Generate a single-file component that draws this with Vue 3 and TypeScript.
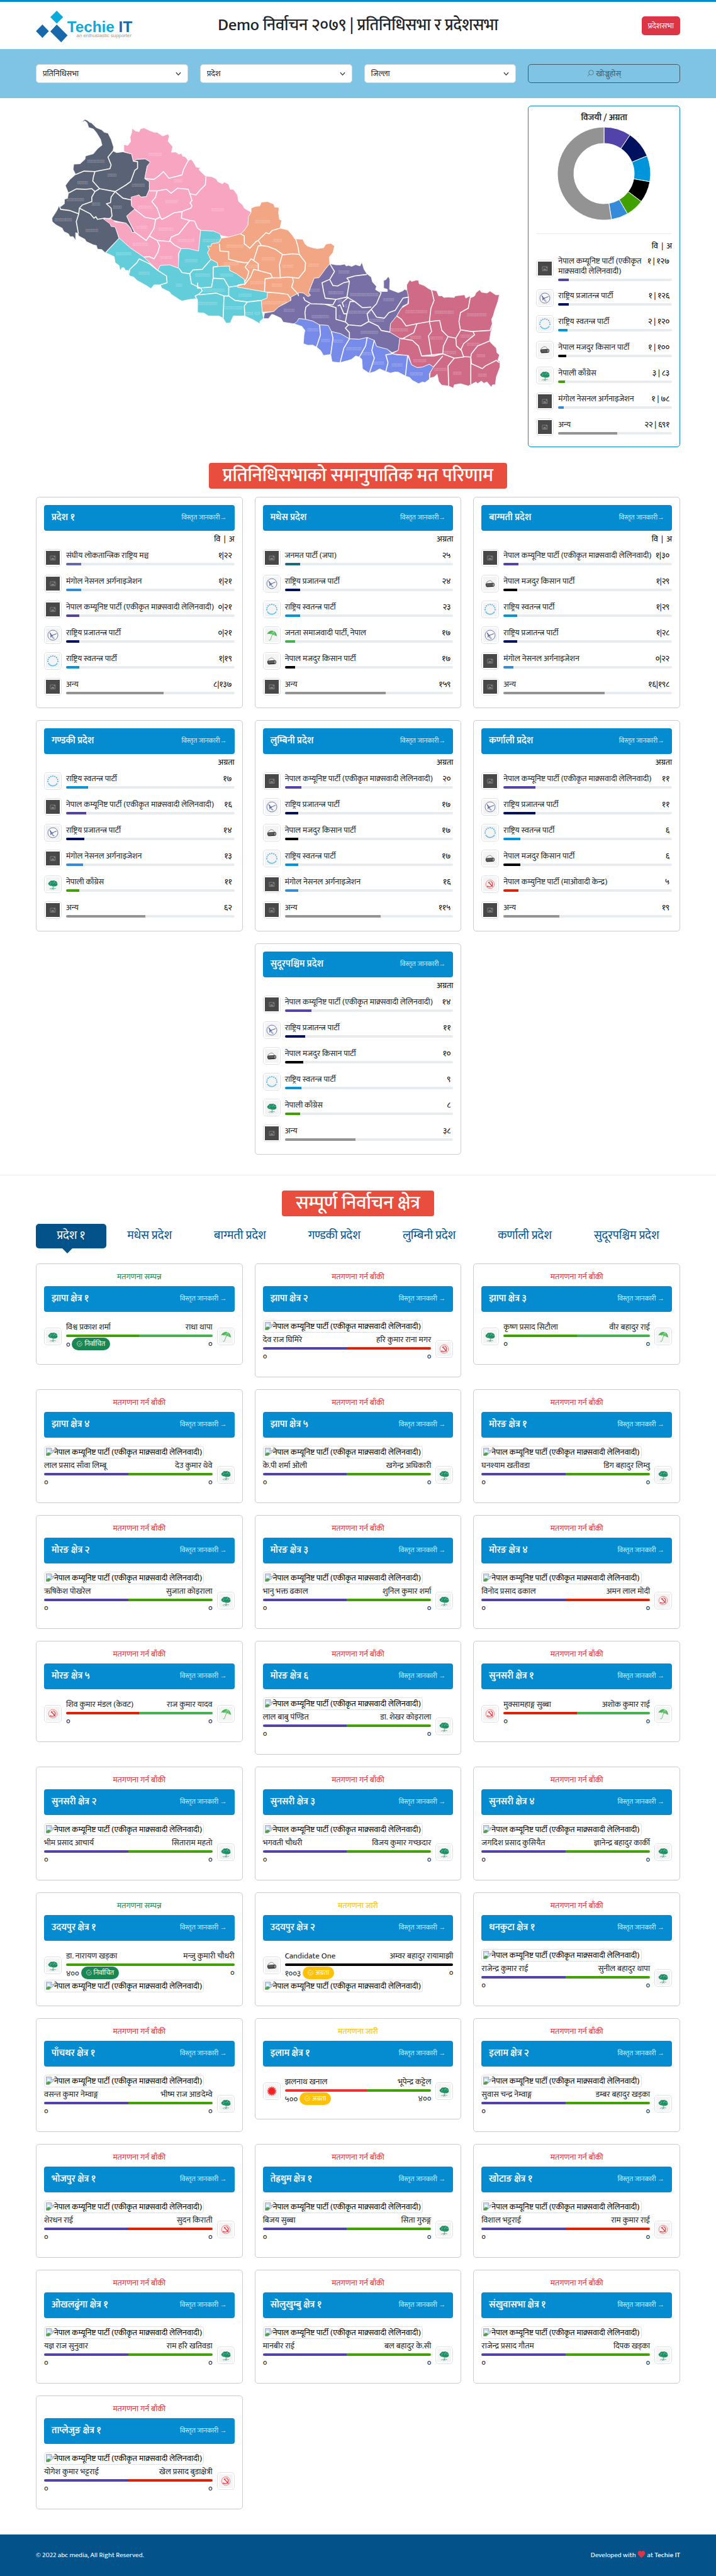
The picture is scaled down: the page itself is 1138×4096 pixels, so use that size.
<script setup lang="ts">
import { ref } from 'vue'

type Party = { name: string; color: string; icon: string }
const parties: Record<string, Party> = {
  uml: { name: 'नेपाल कम्यूनिष्ट पार्टी (एकीकृत माक्र्सवादी लेलिनवादी)', color: '#5243aa', icon: 'blank' },
  rpp: { name: 'राष्ट्रिय प्रजातन्त्र पार्टी', color: '#00115f', icon: 'plough' },
  rsp: { name: 'राष्ट्रिय स्वतन्त्र पार्टी', color: '#0095da', icon: 'bell' },
  nmkp: { name: 'नेपाल मजदुर किसान पार्टी', color: '#000000', icon: 'drum' },
  nc: { name: 'नेपाली काँग्रेस', color: '#3fa000', icon: 'tree' },
  mno: { name: 'मंगोल नेसनल अर्गनाइजेशन', color: '#348bda', icon: 'blank' },
  sl: { name: 'संघीय लोकतान्त्रिक राष्ट्रिय मञ्च', color: '#6767ad', icon: 'blank' },
  jnp: { name: 'जनमत पार्टी (जपा)', color: '#1c6b7b', icon: 'blank' },
  jsp: { name: 'जनता समाजवादी पार्टी, नेपाल', color: '#43b14e', icon: 'umbrella' },
  mc: { name: 'नेपाल कम्युनिष्ट पार्टी (माओवादी केन्द्र)', color: '#dc2200', icon: 'hammer' },
  us: { name: 'नेकपा (एकीकृत समाजवादी)', color: '#f72d2d', icon: 'sun' },
  other: { name: 'अन्य', color: '#939393', icon: 'blank' },
}

type Row = [party: string, value: string, percent: number]
const overall: Row[] = [
  ['uml', '१ | १२७', 9], ['rpp', '१ | १२६', 9], ['rsp', '२ | १२०', 8], ['nmkp', '१ | १००', 7],
  ['nc', '३ | ८३', 6], ['mno', '१ | ७८', 5], ['other', '२२ | ६९१', 52],
]
const provinces: { name: string; head: string; rows: Row[] }[] = [
  { name: 'प्रदेश १', head: 'वि  |  अ', rows: [['sl', '१|२२', 9], ['mno', '१|२१', 9], ['uml', '०|२१', 8], ['rpp', '०|२१', 8], ['rsp', '१|१९', 8], ['other', '८|१३७', 58]] },
  { name: 'मधेस प्रदेश', head: 'अग्रता', rows: [['jnp', '२५', 9], ['rpp', '२४', 9], ['rsp', '२३', 9], ['jsp', '१७', 6], ['nmkp', '१७', 6], ['other', '१५९', 60]] },
  { name: 'बाग्मती प्रदेश', head: 'वि  |  अ', rows: [['uml', '१|३०', 9], ['nmkp', '१|२९', 8], ['rsp', '१|२९', 8], ['rpp', '१|२८', 8], ['mno', '०|२२', 6], ['other', '१६|१९८', 60]] },
  { name: 'गण्डकी प्रदेश', head: 'अग्रता', rows: [['rsp', '१७', 13], ['uml', '१६', 12], ['rpp', '१४', 11], ['mno', '१३', 10], ['nc', '११', 8], ['other', '६२', 47]] },
  { name: 'लुम्बिनी प्रदेश', head: 'अग्रता', rows: [['uml', '२०', 10], ['rpp', '१७', 8], ['nmkp', '१७', 8], ['rsp', '१७', 8], ['mno', '१६', 8], ['other', '११५', 57]] },
  { name: 'कर्णाली प्रदेश', head: 'अग्रता', rows: [['uml', '११', 19], ['rpp', '११', 19], ['rsp', '६', 10], ['nmkp', '६', 10], ['mc', '५', 9], ['other', '१९', 33]] },
  { name: 'सुदूरपश्चिम प्रदेश', head: 'अग्रता', rows: [['uml', '१४', 16], ['rpp', '११', 12], ['nmkp', '१०', 11], ['rsp', '९', 10], ['nc', '८', 9], ['other', '३८', 42]] },
]

const tabs = provinces.map((p) => p.name)
const activeTab = ref(0)

type Seat = {
  name: string
  status?: 'done' | 'live'
  left: [party: string, name: string, votes?: string]
  right: [party: string, name: string, votes?: string]
  badge?: string
  share?: number
}
const seats: Seat[] = [
  { name: 'झापा क्षेत्र १', status: 'done', left: ['nc', 'विश्व प्रकाश शर्मा'], right: ['jsp', 'राधा थापा'], badge: 'निर्वाचित' },
  { name: 'झापा क्षेत्र २', left: ['uml', 'देव राज घिमिरे'], right: ['mc', 'हरि कुमार राना मगर'] },
  { name: 'झापा क्षेत्र ३', left: ['nc', 'कृष्ण प्रसाद सिटौला'], right: ['jsp', 'वीर बहादुर राई'] },
  { name: 'झापा क्षेत्र ४', left: ['uml', 'लाल प्रसाद साँवा लिम्बू'], right: ['nc', 'देउ कुमार थेवे'] },
  { name: 'झापा क्षेत्र ५', left: ['uml', 'के.पी शर्मा ओली'], right: ['nc', 'खगेन्द्र अधिकारी'] },
  { name: 'मोरङ क्षेत्र १', left: ['uml', 'घनश्याम खतीवडा'], right: ['nc', 'डिग बहादुर लिम्वु'] },
  { name: 'मोरङ क्षेत्र २', left: ['uml', 'ऋषिकेश पोखरेल'], right: ['nc', 'सुजाता कोइराला'] },
  { name: 'मोरङ क्षेत्र ३', left: ['uml', 'भानु भक्त ढकाल'], right: ['nc', 'शुनिल कुमार शर्मा'] },
  { name: 'मोरङ क्षेत्र ४', left: ['uml', 'विनोद प्रसाद ढकाल'], right: ['mc', 'अमन लाल मोदी'] },
  { name: 'मोरङ क्षेत्र ५', left: ['mc', 'शिव कुमार मंडल (केवट)'], right: ['jsp', 'राज कुमार यादव'] },
  { name: 'मोरङ क्षेत्र ६', left: ['uml', 'लाल बाबु पंण्डित'], right: ['nc', 'डा. शेखर कोइराला'] },
  { name: 'सुनसरी क्षेत्र १', left: ['mc', 'मुक्सामहाङ्ग सुब्बा'], right: ['jsp', 'अशोक कुमार राई'] },
  { name: 'सुनसरी क्षेत्र २', left: ['uml', 'भीम प्रसाद आचार्य'], right: ['nc', 'सिताराम महतो'] },
  { name: 'सुनसरी क्षेत्र ३', left: ['uml', 'भगवती चौधरी'], right: ['nc', 'विजय कुमार गच्छदार'] },
  { name: 'सुनसरी क्षेत्र ४', left: ['uml', 'जगदिश प्रसाद कुसियैत'], right: ['nc', 'ज्ञानेन्द्र बहादुर कार्की'] },
  { name: 'उदयपुर क्षेत्र १', status: 'done', left: ['nc', 'डा. नारायण खड्का', '४००'], right: ['uml', 'मन्जु कुमारी चौधरी'], badge: 'निर्वाचित', share: 100 },
  { name: 'उदयपुर क्षेत्र २', status: 'live', left: ['nmkp', 'Candidate One', '१००३'], right: ['uml', 'अम्वर बहादुर रायामाझी'], badge: 'अग्रता', share: 100 },
  { name: 'धनकुटा क्षेत्र १', left: ['uml', 'राजेन्द्र कुमार राई'], right: ['nc', 'सुनील बहादुर थापा'] },
  { name: 'पाँचथर क्षेत्र १', left: ['uml', 'वसन्त कुमार नेम्वाङ्ग'], right: ['nc', 'भीष्म राज आङदेम्वे'] },
  { name: 'इलाम क्षेत्र १', status: 'live', left: ['us', 'झलनाथ खनाल', '५००'], right: ['nc', 'भूपेन्द्र कट्टेल', '४००'], badge: 'अग्रता', share: 56 },
  { name: 'इलाम क्षेत्र २', left: ['uml', 'सुवास चन्द्र नेम्वाङ्ग'], right: ['nc', 'डम्बर बहादुर खड्का'] },
  { name: 'भोजपुर क्षेत्र १', left: ['uml', 'शेरधन राई'], right: ['mc', 'सुदन किराती'] },
  { name: 'तेह्रथुम क्षेत्र १', left: ['uml', 'बिजय सुब्बा'], right: ['nc', 'सिता गुरुङ्ग'] },
  { name: 'खोटाङ क्षेत्र १', left: ['uml', 'विशाल भट्टराई'], right: ['mc', 'राम कुमार राई'] },
  { name: 'ओखलढुंगा क्षेत्र १', left: ['uml', 'यज्ञ राज सुनुवार'], right: ['nc', 'राम हरि खतिवडा'] },
  { name: 'सोलुखुम्बु क्षेत्र १', left: ['uml', 'मानबीर राई'], right: ['nc', 'बल बहादुर के.सी'] },
  { name: 'संखुवासभा क्षेत्र १', left: ['uml', 'राजेन्द्र प्रसाद गौतम'], right: ['nc', 'दिपक खड्का'] },
  { name: 'ताप्लेजुङ क्षेत्र १', left: ['uml', 'योगेश कुमार भट्टराई'], right: ['mc', 'खेल प्रसाद बुडाक्षेत्री'] },
]
const statusText = { wait: 'मतगणना गर्न बाँकी', done: 'मतगणना सम्पन्न', live: 'मतगणना जारी' }

// Doughnut chart
const seatsWon: [number, string][] = [
  [128, '#5243aa'], [127, '#00115f'], [122, '#0095da'], [101, '#000000'], [86, '#3fa000'], [79, '#348bda'], [713, '#939393'],
]
const total = seatsWon.reduce((sum, [n]) => sum + n, 0)
let turned = 0
const slices = seatsWon.map(([n, color]) => {
  const a0 = (turned / total) * 2 * Math.PI
  turned += n
  const a1 = (turned / total) * 2 * Math.PI
  const at = (r: number, a: number) => `${(74 + r * Math.sin(a)).toFixed(2)} ${(74 - r * Math.cos(a)).toFixed(2)}`
  const large = a1 - a0 > Math.PI ? 1 : 0
  return { color, d: `M${at(74, a0)}A74 74 0 ${large} 1 ${at(74, a1)}L${at(48, a1)}A48 48 0 ${large} 0 ${at(48, a0)}Z` }
})

// Map outlines, on a 1568-unit survey grid that is projected to the drawing's own units
const project = (points: string) =>
  points.split(' ').map((p) => {
    const [x, y] = p.split(',').map(Number)
    return `${(x * 0.625).toFixed(1)},${(y * 0.4464).toFixed(1)}`
  }).join(' ')

const regions = [
  { color: '#5a6275', points: '166,103 178,90 185,94 195,105 198,105 214,127 232,137 240,148 252,152 262,180 270,215 268,232 280,240 300,236 328,246 333,275 345,270 372,268 388,282 386,292 378,300 370,357 385,370 385,405 375,438 358,440 350,430 326,452 328,480 338,493 312,525 320,550 337,598 330,600 322,575 310,557 285,550 270,545 275,570 287,625 243,690 232,676 218,674 215,658 205,655 182,640 178,630 158,615 155,603 148,600 148,635 140,618 130,618 125,605 110,595 105,580 85,565 73,550 72,535 88,500 95,477 100,483 112,470 112,450 122,445 125,422 115,388 130,360 148,338 140,315 142,292 162,290 178,270 180,255 205,245 220,220 233,206 228,180 215,150 205,133 190,127 185,105 178,97 166,103' },
  { color: '#f8a5c2', points: '330,130 340,142 352,146 356,133 368,128 382,138 400,148 410,148 428,165 445,156 449,165 445,188 460,213 456,238 470,237 480,247 488,243 492,256 500,258 510,275 520,270 530,290 535,305 550,308 544,315 550,325 565,345 585,348 600,358 605,370 620,380 626,372 640,382 645,405 655,405 668,430 672,460 685,475 690,490 712,508 703,530 702,565 690,590 678,605 640,620 612,612 590,593 550,590 543,683 510,672 487,672 478,695 480,760 450,745 420,748 412,770 367,710 325,670 288,625 275,575 262,572 258,560 237,538 260,535 275,552 310,557 325,580 330,600 338,598 320,550 312,525 338,493 328,480 326,440 352,430 358,440 375,438 385,405 385,370 370,357 378,300 388,282 372,268 345,270 333,278 328,246 303,235 303,203 315,208 325,190 323,170 328,150' },
  { color: '#63cdda', points: '288,625 325,670 367,710 412,770 420,748 450,745 478,760 480,695 487,672 510,672 543,683 550,590 590,593 612,605 616,625 608,645 585,650 583,662 572,660 578,675 572,690 582,720 603,735 605,752 643,750 643,770 665,785 690,810 693,830 670,835 668,845 690,850 730,860 765,868 763,895 745,905 748,958 752,985 740,1000 740,1010 720,993 692,975 655,975 650,990 645,1006 632,1008 622,985 608,975 575,975 560,962 540,960 540,905 532,897 505,903 490,908 480,900 455,877 450,867 425,850 420,835 400,835 390,852 375,838 365,830 345,815 335,800 322,795 318,785 318,770 308,770 304,758 296,758 294,768 290,767 288,748 275,735 272,708 245,690' },
  { color: '#f3a683', points: '712,490 725,482 740,480 745,463 765,460 785,472 788,485 802,487 800,510 803,540 810,545 805,580 830,588 845,612 852,628 878,630 885,650 892,660 910,668 925,672 945,668 952,652 968,648 980,660 975,690 963,710 965,740 950,765 940,785 930,803 915,805 905,840 897,870 903,882 895,888 880,872 868,870 840,890 838,912 825,915 800,935 785,955 748,958 745,905 763,895 765,868 730,860 690,850 668,845 670,835 693,830 690,810 665,785 643,770 643,750 605,752 603,735 582,720 572,690 578,675 572,660 583,662 585,650 608,645 616,625 640,620 678,605 690,590 702,565 703,530 712,508' },
  { color: '#786fa6', points: '965,740 985,745 1000,745 1012,742 1018,750 1025,747 1035,752 1048,744 1062,750 1068,733 1075,765 1084,785 1098,800 1102,822 1115,842 1112,855 1130,865 1150,865 1150,855 1138,850 1138,815 1145,812 1153,797 1158,810 1157,855 1185,870 1200,862 1205,855 1218,862 1218,890 1215,920 1200,930 1190,950 1180,975 1160,1010 1158,1048 1190,1075 1185,1130 1165,1140 1150,1125 1115,1112 1108,1085 1085,1072 1060,1080 1028,1078 1000,1055 970,1045 960,1018 932,1015 910,998 885,990 865,987 860,1008 848,1010 815,1003 808,985 785,970 778,968 768,987 752,987 755,962 785,955 800,935 840,905 840,890 868,870 880,872 895,888 903,882 897,870 905,840 915,805 930,803 940,785 950,765' },
  { color: '#778beb', points: '865,987 885,990 910,998 932,1015 960,1018 970,1045 1000,1055 1028,1078 1060,1080 1085,1072 1108,1085 1115,1112 1150,1125 1165,1145 1180,1150 1215,1153 1228,1195 1245,1207 1262,1205 1285,1192 1298,1205 1285,1235 1285,1260 1270,1275 1263,1272 1250,1280 1240,1272 1230,1265 1222,1252 1208,1245 1185,1228 1175,1227 1160,1232 1145,1225 1125,1213 1110,1225 1092,1233 1070,1213 1068,1170 1060,1160 1048,1155 1035,1170 1025,1175 998,1185 980,1183 972,1180 968,1148 945,1153 935,1130 922,1115 910,1106 895,1107 880,1100 882,1060 885,1040 875,1022 850,1010 860,1000' },
  { color: '#cf6a87', points: '1213,860 1212,835 1222,813 1228,820 1242,814 1250,815 1252,830 1268,838 1280,850 1290,858 1308,862 1315,885 1325,884 1332,892 1345,890 1365,892 1368,885 1398,880 1402,895 1415,885 1416,895 1430,885 1435,870 1447,857 1452,868 1470,872 1480,863 1498,880 1510,880 1505,910 1500,930 1495,950 1490,975 1485,990 1488,1020 1482,1050 1478,1085 1482,1095 1500,1120 1502,1140 1510,1150 1505,1175 1512,1180 1512,1205 1500,1250 1497,1285 1488,1285 1484,1295 1470,1272 1460,1278 1452,1268 1440,1280 1435,1272 1420,1283 1410,1290 1385,1280 1365,1285 1362,1300 1347,1290 1325,1287 1315,1270 1310,1237 1300,1250 1286,1255 1288,1230 1298,1205 1285,1192 1262,1205 1245,1207 1228,1195 1218,1153 1165,1145 1185,1130 1190,1075 1158,1048 1160,1010 1180,975 1195,940 1218,920 1218,890' },
].map((r) => ({ ...r, points: project(r.points) }))

const borders = [
  '268,232 252,260 262,295 258,312 210,325 175,323 148,338',
  '210,325 205,350 203,368 225,402 275,415 310,385 325,370 338,320 347,310 347,280 333,278',
  '125,422 150,403 180,405 200,402 210,415 225,402',
  '210,415 200,440 200,460 170,475 160,490 158,515 128,500 100,495 95,477',
  '275,415 262,440 260,465 247,470 262,490 265,525 258,538 240,535 218,540 213,528 207,535 195,515 160,490',
  '275,415 300,445 326,452', '158,515 150,550 157,605',
  '370,357 400,360 415,345 430,325 448,355 490,340 495,315 510,275',
  '385,412 410,412 440,405 455,422 475,400 510,405 515,425 535,430 550,405 565,385 567,348',
  '410,412 405,440 393,460 410,490 420,530 405,540 370,530 338,495',
  '515,425 522,455 516,465 522,480 518,490 490,505 465,510 440,530 425,540 420,530',
  '490,505 488,535 515,545 530,548 540,580 550,590',
  '405,540 400,580 385,615 375,635 338,598',
  '385,615 410,635 450,640 455,620 480,605 500,570 515,545',
  '450,635 465,655 487,672', '410,635 418,660 412,690 400,718 385,708 367,710',
  '352,718 345,735 322,765 320,785', '352,718 385,740 412,770 440,795 442,825 420,835',
  '480,760 490,780 515,785 520,830 550,850 555,862 543,878 532,885 540,905',
  '515,785 525,768 555,765 582,722', '540,825 540,850 585,845 590,805 590,755 605,752',
  '590,805 625,808 640,845 665,840 693,830', '640,845 640,885 625,885 600,872 545,880',
  '622,985 625,885', '640,885 660,905 700,912 745,905', '692,975 690,930 700,912',
  '678,605 690,615 690,650 708,670 728,640 735,635 760,600 770,605 780,590 805,580',
  '735,635 745,658 735,660 720,725 712,718 703,735 690,735 670,730 640,720 640,685 612,683 610,650',
  '745,658 765,662 790,675 815,700 845,695 867,698 862,660 855,628',
  '812,700 803,745 806,803 830,800 865,805 885,770 887,735 867,698',
  '703,735 693,755 705,775 700,800 690,825', '720,725 735,740 735,770 720,765 710,800 690,835',
  '735,770 775,785 780,803 757,808 755,865', '780,803 806,803', '845,800 848,820 842,845 862,875 865,885',
  '765,868 800,872 830,878 838,895',
  '965,740 980,775 965,810 940,825 945,865 950,895 985,900 1020,890 1028,820 1010,825 990,840 975,838 965,812',
  '1028,820 1020,805 1045,795 1084,788', '880,890 885,905 905,920 950,922 975,925 985,900',
  '900,922 888,935 885,960 887,990', '950,922 985,938 985,990 1015,1002',
  '1112,855 1130,870 1115,920 1098,945 1115,980 1140,985 1155,960 1175,950 1200,895 1218,890',
  '1020,890 1045,910 1070,938 1098,935', '990,930 998,925 1010,965 1020,965 1030,910 1045,910', '1010,935 1005,915 1025,890',
  '1020,965 1015,1002', '1098,945 1085,965 1090,1000 1065,1020 1025,1015 1015,1002',
  '1025,1015 1015,1030 1028,1050 1028,1078', '1090,1000 1120,1020 1130,1040 1158,1048',
  '932,1015 935,1060 922,1115', '970,1045 975,1075 968,1148', '1028,1078 1010,1120 998,1185',
  '1085,1072 1080,1110 1060,1160', '1108,1085 1100,1130 1108,1165 1092,1233',
  '1165,1145 1145,1150 1152,1185 1145,1225', '1215,1153 1208,1245',
  '1292,858 1300,905 1290,940 1285,1000 1245,1010 1210,1020 1195,990 1180,975',
  '1285,1000 1318,995 1325,1040 1345,1068 1370,1075 1385,1040 1380,1000 1385,960 1410,940 1416,895',
  '1387,1038 1420,1045 1480,1040 1488,1010', '1245,1010 1235,1050 1195,1080',
  '1190,1075 1230,1085 1250,1110 1260,1155 1292,1150 1282,1065 1292,1045 1285,1000',
  '1345,1068 1330,1110 1328,1145 1292,1150', '1370,1075 1372,1110 1388,1130 1395,1160 1365,1165 1328,1145',
  '1425,1045 1430,1060 1395,1100 1385,1130', '1478,1088 1440,1110 1420,1145 1418,1160 1395,1158',
  '1418,1160 1420,1190 1455,1212 1465,1200 1500,1175 1510,1185', '1328,1155 1298,1205',
  '1365,1165 1345,1200 1347,1290', '1418,1165 1418,1283', '1260,1155 1300,1155 1328,1145',
].map(project)

const labels = ([
  [213, 275, 8], [404, 246, 6], [265, 340, 4], [170, 372, 5], [349, 383, 6], [478, 365, 4], [147, 448, 8], [213, 468, 4],
  [282, 482, 4], [371, 482, 7], [457, 459, 6], [605, 493, 6], [108, 540, 8], [200, 589, 6], [361, 573, 5], [438, 582, 7],
  [748, 547, 7], [503, 632, 5, '(▯)'], [585, 632, 5, '(▯▯)'], [356, 650, 7], [302, 694, 7], [439, 710, 6], [519, 724, 6],
  [660, 659, 8], [797, 632, 4], [768, 715, 6], [649, 737, 7], [720, 748, 5], [830, 748, 5], [913, 744, 5], [368, 780, 5],
  [480, 833, 3], [556, 789, 7], [633, 789, 6], [592, 856, 10], [734, 824, 7], [795, 833, 5], [692, 880, 6], [572, 916, 9],
  [653, 936, 9], [715, 961, 4, ' (▯)'], [785, 914, 8, '(▯▯)'], [1010, 775, 5], [915, 856, 5], [984, 867, 7], [1075, 878, 13],
  [1154, 898, 5], [997, 905, 2], [1017, 927, 1], [1058, 956, 11], [997, 977, 1], [934, 977, 8], [834, 947, 5], [1114, 992, 7],
  [1243, 952, 10], [1333, 957, 9], [1437, 968, 9], [910, 1035, 5], [951, 1082, 4], [989, 1086, 5], [1092, 1046, 8],
  [1188, 1035, 8], [1241, 1068, 5], [1308, 1071, 6], [1405, 1064, 6], [1426, 1100, 6], [1042, 1120, 7], [1084, 1142, 5],
  [1350, 1138, 6], [1451, 1150, 4], [1121, 1185, 5], [1181, 1194, 5], [1254, 1174, 6], [1320, 1214, 6], [1374, 1230, 4],
  [1455, 1239, 4], [1243, 1234, 6],
] as [number, number, number, string?][]).map(([x, y, n, tail]) => ({ x: x * 0.625, y: y * 0.4464 + 3, text: '▯'.repeat(n) + (tail ?? '') }))

const rays = Array.from({ length: 14 }, (_, i) => (i * 360) / 14)
const dots = Array.from({ length: 9 }, (_, i) => {
  const a = Math.PI * (-0.02 + (i * 1.04) / 8)
  return { x: 11 - 8 * Math.cos(a), y: 11 - 8 * Math.sin(a) }
})
</script>

<template>
  <svg class="sprite" aria-hidden="true">
    <symbol id="blank" viewBox="0 0 22 22">
      <rect width="22" height="22" fill="#484848" />
      <path d="M7 8h8v6.500H7z" fill="none" stroke="#8a8a8a" stroke-width=".8" />
      <path d="M8 13.500l2-3 1.500 1.500 1-1 1.500 2.500z" fill="#8a8a8a" /><circle cx="13.400" cy="9.300" r=".8" fill="#aaa" />
    </symbol>
    <symbol id="plough" viewBox="0 0 22 22">
      <rect width="22" height="22" fill="#f4f4f4" />
      <circle cx="11" cy="11" r="8" fill="#f9f9fb" stroke="#3a4a8a" stroke-width=".7" />
      <path d="M6 6.500l2 5-.5 3M8 12l9-3.500M8 11.500l3 4 2.500.5M7 8l4.500 5.500" fill="none" stroke="#1c2d78" stroke-width=".8" />
    </symbol>
    <symbol id="bell" viewBox="0 0 22 22">
      <rect width="22" height="22" fill="#f4f4f4" />
      <circle v-for="(d, i) in dots" :key="i" :cx="d.x" :cy="d.y" r=".9" fill="#2a9fdc" />
      <path d="M4 14.500a8 8 0 0 0 14 0" fill="none" stroke="#4ab0e4" stroke-width="1.600" stroke-dasharray="1.600 .4" />
    </symbol>
    <symbol id="drum" viewBox="0 0 22 22">
      <rect width="22" height="22" fill="#f4f4f4" />
      <path d="M5 10C6 7 8 8 9 6.500c3-1 5 1 6 3" fill="none" stroke="#666" stroke-width=".7" />
      <path d="M4.500 10.500l11-.8c3 0 3 5.800 0 6.300l-9.500.5c-2.500-1-2.500-5-1.500-6z" fill="#333" />
      <path d="M5 12l9-.5M5 14l9-.5" stroke="#bbb" stroke-width=".6" /><ellipse cx="16" cy="12.800" rx="1.800" ry="2.700" fill="#999" stroke="#222" stroke-width=".6" />
    </symbol>
    <symbol id="tree" viewBox="0 0 22 22">
      <rect width="22" height="22" fill="#f4f4f4" />
      <path d="M4 11c-1-2 1-3 2-4 1-2 3-2 4-1.500 2-1 4-.5 5 .5 2 0 3 2 3 3.500 1 2 0 4-2 4.500-1.500.5-3 .5-4 0-1 .5-2 0-3-.5-2 0-4-.5-5-2.500z" fill="#1b8f63" />
      <path d="M11 11l1 3-1 5M12 14l3-2M11.500 15l-3-3M6 18.500l5-1.500 5 1M9 20l2-2 2 2" fill="none" stroke="#3a9a78" stroke-width=".7" />
      <path d="M7 8l2 1M13 6l1 3M15 10l2-1M11 8l1 2M6 11l2-1" stroke="#9adcc2" stroke-width=".7" />
    </symbol>
    <symbol id="hammer" viewBox="0 0 22 22">
      <rect width="22" height="22" fill="#f4f4f4" />
      <circle cx="11" cy="11" r="6.800" fill="#fbf3f3" stroke="#ee5a5a" stroke-width=".7" />
      <path d="M11.500 6.500c4 1 4.500 6 1 8-2 1-4 .5-5.500-.5l-1 1.500" fill="none" stroke="#e8323c" stroke-width="1.100" />
      <path d="M8 9l2-2M9 8l6 7" stroke="#e8323c" stroke-width="1.200" />
    </symbol>
    <symbol id="umbrella" viewBox="0 0 22 22">
      <rect width="22" height="22" fill="#f4f4f4" />
      <path d="M3.500 9.500C5 5 10 2.500 14.500 4.500c3 1.500 4.500 5 4.500 8.500-1-1-2-1.500-3-1-1-1.500-2-2-3.500-1.500-1-1.500-2.500-2-4-1-1.500-1-3.500-1-5 0z" fill="#4cb558" />
      <path d="M12 9L9 18c-.5 1.500-2 1.500-2.500 0" fill="none" stroke="#5cba67" stroke-width=".9" />
      <path d="M14 4.500l-2 5M14 4.500l2 7M14 4.500L8.500 9" stroke="#c8eccb" stroke-width=".6" />
    </symbol>
    <symbol id="sun" viewBox="0 0 22 22">
      <rect width="22" height="22" fill="#f4f4f4" />
      <path v-for="r in rays" :key="r" d="M9.300 6.500L11 3l1.700 3.500z" fill="#f04545" :transform="`rotate(${r} 11 11)`" />
      <circle cx="11" cy="11" r="5" fill="#f71f1f" />
    </symbol>
  </svg>

  <header class="top wrap">
    <a href="#" class="logo" aria-label="Techie IT">
      <svg viewBox="0 0 197 65" width="155" height="51">
        <path d="M42 0l13 13-13 13-13-13z" fill="#0aaadc" />
        <path d="M13 28l13 13.500L13 55 0 41.500zM42 28l22 22-13 14-22-22z" fill="#1769ab" />
        <text x="63" y="43" class="brand">Techie <tspan fill="#1769ab">IT</tspan></text>
        <text x="82" y="54" class="tag">an enthusiastic supporter</text>
      </svg>
    </a>
    <h1>Demo निर्वाचन २०७९ | प्रतिनिधिसभा र प्रदेशसभा</h1>
    <button class="switch" type="button">प्रदेशसभा</button>
  </header>

  <form class="filters wrap" @submit.prevent>
    <label v-for="f in ['प्रतिनिधिसभा', 'प्रदेश', 'जिल्ला']" :key="f" class="field">
      <select :aria-label="f"><option>{{ f }}</option></select>
      <svg viewBox="0 0 10 10" width="9" height="9"><path d="M1 2.500l4 4.500 4-4.500" fill="none" stroke="#343a40" stroke-width="1.400" /></svg>
    </label>
    <button type="submit" class="search">
      <svg viewBox="0 0 16 16" width="11" height="11"><g fill="none" stroke="currentColor"><circle cx="9.500" cy="6.500" r="5.500" /><path d="M5.500 10.500L1 15" /></g></svg>
      खोज्नुहोस्
    </button>
  </form>

  <main class="wrap">
    <section class="overview">
      <svg class="map" viewBox="0 0 980 700" role="img" aria-label="नेपाल">
        <polygon v-for="r in regions" :key="r.color" :points="r.points" :fill="r.color" />
        <polyline v-for="b in borders" :key="b" :points="b" />
        <text v-for="(l, i) in labels" :key="i" :x="l.x" :y="l.y">{{ l.text }}</text>
      </svg>
      <aside class="summary">
        <h2>विजयी / अग्रता</h2>
        <svg class="donut" viewBox="0 0 148 148" width="148" height="148">
          <path v-for="s in slices" :key="s.color" :d="s.d" :fill="s.color" />
        </svg>
        <p class="head">{{ 'वि  |  अ' }}</p>
        <ul class="rows">
          <li v-for="[id, value, pct] in overall" :key="id">
            <span class="icon"><svg><use :href="`#${parties[id].icon}`" /></svg></span>
            <div class="body">
              <div class="line"><span class="name">{{ parties[id].name }}</span><span class="value">{{ value }}</span></div>
              <div class="bar"><i :style="{ width: pct + '%', background: parties[id].color }"></i></div>
            </div>
          </li>
        </ul>
      </aside>
    </section>

    <h2 class="banner">प्रतिनिधिसभाको समानुपातिक मत परिणाम</h2>

    <section class="provinces">
      <article v-for="p in provinces" :key="p.name" class="card">
        <header class="cap"><h3>{{ p.name }}</h3><a href="#">विस्तृत जानकारी→</a></header>
        <p class="head">{{ p.head }}</p>
        <ul class="rows">
          <li v-for="[id, value, pct] in p.rows" :key="id">
            <span class="icon"><svg><use :href="`#${parties[id].icon}`" /></svg></span>
            <div class="body">
              <div class="line"><span class="name">{{ parties[id].name }}</span><span class="value">{{ value }}</span></div>
              <div class="bar"><i :style="{ width: pct + '%', background: parties[id].color }"></i></div>
            </div>
          </li>
        </ul>
      </article>
    </section>
  </main>

  <hr />

  <section class="wrap seats">
    <h2 class="banner">सम्पूर्ण निर्वाचन क्षेत्र</h2>
    <nav class="tabs">
      <button v-for="(t, i) in tabs" :key="t" type="button" :class="{ active: i === activeTab }" @click="activeTab = i">{{ t }}</button>
    </nav>
    <div class="grid">
      <article v-for="s in seats" :key="s.name" class="card seat">
        <p class="status" :class="s.status ?? 'wait'">{{ statusText[s.status ?? 'wait'] }}</p>
        <header class="cap"><h3>{{ s.name }}</h3><a href="#">विस्तृत जानकारी →</a></header>
        <div class="duel">
          <p v-if="s.left[0] === 'uml'" class="alt">
            <svg viewBox="0 0 16 16" width="13" height="13"><path d="M.5.500h10l5 5v2L6 15.500H.500z" fill="#c3d9f7" stroke="#999" /><path d="M1 15v-3c3-3 6-3 9-.5L6 15z" fill="#4ba43c" /><path d="M10.500.500v5h5" fill="#fff" stroke="#999" /><path d="M3 7a2 2 0 0 1 4-1 1.500 1.500 0 0 1 1 2H3z" fill="#fff" /></svg>{{ parties.uml.name }}
          </p>
          <div class="pair">
            <span v-if="s.left[0] !== 'uml'" class="icon"><svg><use :href="`#${parties[s.left[0]].icon}`" /></svg></span>
            <div class="body">
              <div class="names"><span>{{ s.left[1] }}</span><span>{{ s.right[1] }}</span></div>
              <div class="bar">
                <i :style="{ width: (s.share ?? 50) + '%', background: parties[s.left[0]].color }"></i>
                <i :style="{ width: 100 - (s.share ?? 50) + '%', background: parties[s.right[0]].color }"></i>
              </div>
              <div class="votes">
                <span>{{ s.left[2] ?? '०' }}
                  <b v-if="s.badge" class="badge" :class="s.status">
                    <svg viewBox="0 0 16 16" width="9" height="9"><g fill="none" stroke="currentColor" stroke-width="1.200"><path d="M15 7.500A7 7 0 1 1 11 1.700" /><path d="M5 7.500L8 10.500 14.500 3" /></g></svg>{{ s.badge }}
                  </b>
                </span>
                <span>{{ s.right[2] ?? '०' }}</span>
              </div>
            </div>
            <span v-if="s.right[0] !== 'uml'" class="icon"><svg><use :href="`#${parties[s.right[0]].icon}`" /></svg></span>
          </div>
          <p v-if="s.right[0] === 'uml'" class="alt">
            <svg viewBox="0 0 16 16" width="13" height="13"><path d="M.5.500h10l5 5v2L6 15.500H.500z" fill="#c3d9f7" stroke="#999" /><path d="M1 15v-3c3-3 6-3 9-.5L6 15z" fill="#4ba43c" /><path d="M10.500.500v5h5" fill="#fff" stroke="#999" /><path d="M3 7a2 2 0 0 1 4-1 1.500 1.500 0 0 1 1 2H3z" fill="#fff" /></svg>{{ parties.uml.name }}
          </p>
        </div>
      </article>
    </div>
  </section>

  <footer class="foot wrap">
    <span>© 2022 abc media, All Right Reserved.</span>
    <span>Developed with
      <svg viewBox="0 0 16 16" width="13" height="13"><path d="M8 15C2 10 0 7 1 4c1-3 5-4 7-1 2-3 6-2 7 1 1 3-1 6-7 11z" fill="#dc3545" /></svg>
      at <a href="#">Techie IT</a></span>
  </footer>
</template>

<style>
body {
  margin: 0;
  background: #fff;
}
#app {
  font-family: Mukta, 'Noto Sans Devanagari', 'Noto Sans', 'Open Sans', sans-serif;
  font-size: 13px;
  line-height: 16px;
  color: #212529;
}
</style>

<style scoped>
* { box-sizing: border-box; }
h1, h2, h3, p, ul { margin: 0; padding: 0; }
ul { list-style: none; }
a { color: inherit; text-decoration: none; }
button, select { font: inherit; }
.sprite { position: absolute; width: 0; height: 0; }
.wrap { padding-left: 5%; padding-right: 5%; }

.top {
  display: grid;
  grid-template-columns: 1fr auto 1fr;
  align-items: center;
  height: 78px;
  border-top: 3px solid #048bd0;
}
.logo { display: flex; margin-top: 4px; }
.brand { font: 700 31px 'Liberation Sans', sans-serif; fill: #0aaadc; }
.tag { font: 10px 'Liberation Sans', sans-serif; fill: #999; }
h1 { font-size: 26px; line-height: 32px; font-weight: 500; white-space: nowrap; }
.switch { justify-self: end; height: 30px; padding: 0 10px; border: 0; border-radius: 5px; background: #dc3545; color: #fff; }

.filters {
  display: grid;
  grid-template-columns: repeat(4, 1fr);
  gap: 19px;
  align-items: center;
  height: 78px;
  background: #80c4e5;
}
.field { position: relative; display: flex; }
.field svg { position: absolute; right: 11px; top: 11px; pointer-events: none; }
select {
  appearance: none;
  width: 100%;
  height: 30px;
  padding: 0 10px;
  border: 1px solid #ced4da;
  border-radius: 5px;
  background: #fff;
  color: #212529;
}
.search { height: 30px; border: 1px solid #415a66; border-radius: 5px; background: none; color: #415a66; }
.search svg { vertical-align: -1px; }

.overview { display: grid; grid-template-columns: repeat(4, minmax(0, 1fr)); column-gap: 19px; align-items: start; padding-top: 12px; margin-bottom: 24px; }
.map { grid-column: span 3; width: calc(100% + 12px); height: auto; margin: -10px 0 0 -10px; }
.map polyline { fill: none; stroke: #fff; stroke-width: 2; stroke-linejoin: round; }
.map polygon { stroke: #fff; stroke-width: 1; stroke-linejoin: round; }
.map text { font: 8px 'DejaVu Sans', sans-serif; fill: #fff; fill-opacity: .55; text-anchor: middle; }

.summary { border: 1px solid #048bd0; border-radius: 5px; padding: 10px 12px 17px; }
.summary h2 { text-align: center; font-size: 14px; line-height: 16px; font-weight: 600; }
.donut { display: block; margin: 7px auto 21px; stroke: #fff; stroke-width: 1; }
.head { text-align: right; white-space: pre; color: #000; }
.summary .head { border-top: 1px solid #e9ecef; padding-top: 11px; margin-bottom: 8px; }

.rows { display: grid; gap: 13px; }
.rows li { display: flex; align-items: center; gap: 7px; }
.icon { flex: none; width: 28px; height: 28px; padding: 2px; border: 1px solid #dee2e6; border-radius: 5px; background: #fff; }
.icon svg { display: block; width: 22px; height: 22px; }
.body { flex: 1; min-width: 0; }
.line { display: flex; justify-content: space-between; padding-right: 4px; margin-bottom: 4px; }
.name { flex: 1 1 0; min-width: 0; white-space: nowrap; }
.value { flex: none; color: #000; }
.summary .name { white-space: normal; }
.summary .value { margin-left: -8px; }
.bar { display: flex; height: 4px; border-radius: 3px; overflow: hidden; background: #e9ecef; }

.banner {
  width: fit-content;
  margin: 0 auto 13px;
  padding: 0 22px;
  border-radius: 4px;
  background: #e94d3d;
  color: #fff;
  font-size: 30px;
  line-height: 41px;
  font-weight: 500;
}
.provinces { display: flex; flex-wrap: wrap; justify-content: center; gap: 19px; }
.provinces .card { flex: 0 1 calc((100% - 38px) / 3); height: 336px; }
.card { min-width: 0; border: 1px solid #ccc; border-radius: 5px; padding: 12px; }
.cap { display: flex; justify-content: space-between; align-items: center; height: 41px; padding: 0 12px; border-radius: 4px; background: #048bd0; color: #fff; }
.cap h3 { font-size: 15px; line-height: 20px; font-weight: 600; }
.cap a { font-size: 11px; color: #d5ecf8; }
.card .head { margin: 5px 0 8px; }

hr { height: 1px; margin: 32px 0 24px; border: 0; background: #eceeef; }
.seats .banner { margin-bottom: 12px; }
.tabs { display: flex; margin-bottom: 24px; }
.tabs button {
  position: relative;
  flex: 1 1 auto;
  height: 39px;
  padding: 0;
  border: 0;
  border-radius: 5px;
  background: none;
  color: #04528a;
  font-size: 19px;
  white-space: nowrap;
}
.tabs .active { background: #04528a; color: #fff; }
.tabs .active::after {
  content: '';
  position: absolute;
  left: 42px;
  top: 100%;
  border: 8px solid transparent;
  border-top-color: #04528a;
  border-bottom: 0;
}
.grid { display: grid; grid-template-columns: repeat(3, minmax(0, 1fr)); gap: 19px; grid-auto-rows: minmax(181px, auto); align-items: start; }
.status { margin-bottom: 7px; text-align: center; }
.wait { color: #dc3545; }
.done { color: #198754; }
.live { color: #ffc107; }
.duel { padding: 13px 0 9px; }
.alt { display: flex; align-items: center; width: fit-content; height: 20px; padding: 0 2px; border: 1px solid #dee2e6; border-radius: 4px; color: #000; white-space: nowrap; }
.alt svg { flex: none; }
.pair { display: flex; align-items: center; gap: 7px; padding-top: 3px; }
.names { display: flex; justify-content: space-between; margin-bottom: 4px; white-space: nowrap; }
.votes { display: flex; justify-content: space-between; align-items: center; height: 22px; }
.badge { display: inline-flex; align-items: center; gap: 3px; height: 20px; padding: 0 8px; border-radius: 10px; color: #fff; font-size: 11px; font-weight: 400; }
.badge.done { background: #198754; }
.badge.live { background: #ffc107; }

.foot { display: flex; justify-content: space-between; align-items: center; height: 67px; margin-top: 40px; background: #04528a; color: #fff; font-size: 11px; }
.foot svg { vertical-align: -2px; }
.foot a { font-weight: 500; }
</style>
